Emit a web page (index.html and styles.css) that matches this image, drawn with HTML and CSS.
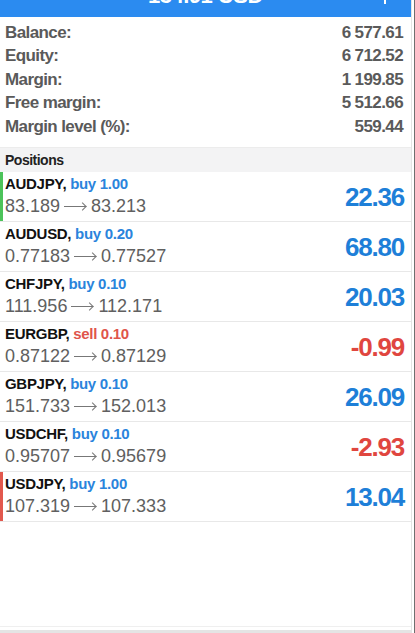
FILE: index.html
```html
<!DOCTYPE html>
<html lang="en">
<head>
    <meta charset="UTF-8">
    <meta name="viewport" content="width=device-width, initial-scale=1.0">
    <title>Trade</title>
    <link rel="stylesheet" href="styles.css">
</head>
<body>
    <div class="screen">
        <div class="topbar">
            <span class="title">134.91 USD</span>
            <span class="plus"></span>
        </div>

        <div class="account">
            <div class="acc-row"><span>Balance:</span><span>6 577.61</span></div>
            <div class="acc-row"><span>Equity:</span><span>6 712.52</span></div>
            <div class="acc-row"><span>Margin:</span><span>1 199.85</span></div>
            <div class="acc-row"><span>Free margin:</span><span>5 512.66</span></div>
            <div class="acc-row"><span>Margin level (%):</span><span>559.44</span></div>
        </div>

        <div class="section">Positions</div>

        <div class="positions">
            <div class="pos mark-green">
                <div class="pos-info">
                    <div class="pos-head">AUDJPY, <span class="buy">buy 1.00</span></div>
                    <div class="pos-price">83.189<span class="arrow"></span>83.213</div>
                </div>
                <div class="profit up">22.36</div>
            </div>
            <div class="pos">
                <div class="pos-info">
                    <div class="pos-head">AUDUSD, <span class="buy">buy 0.20</span></div>
                    <div class="pos-price">0.77183<span class="arrow"></span>0.77527</div>
                </div>
                <div class="profit up">68.80</div>
            </div>
            <div class="pos">
                <div class="pos-info">
                    <div class="pos-head">CHFJPY, <span class="buy">buy 0.10</span></div>
                    <div class="pos-price">111.956<span class="arrow"></span>112.171</div>
                </div>
                <div class="profit up">20.03</div>
            </div>
            <div class="pos">
                <div class="pos-info">
                    <div class="pos-head">EURGBP, <span class="sell">sell 0.10</span></div>
                    <div class="pos-price">0.87122<span class="arrow"></span>0.87129</div>
                </div>
                <div class="profit down">-0.99</div>
            </div>
            <div class="pos">
                <div class="pos-info">
                    <div class="pos-head">GBPJPY, <span class="buy">buy 0.10</span></div>
                    <div class="pos-price">151.733<span class="arrow"></span>152.013</div>
                </div>
                <div class="profit up">26.09</div>
            </div>
            <div class="pos">
                <div class="pos-info">
                    <div class="pos-head">USDCHF, <span class="buy">buy 0.10</span></div>
                    <div class="pos-price">0.95707<span class="arrow"></span>0.95679</div>
                </div>
                <div class="profit down">-2.93</div>
            </div>
            <div class="pos mark-red">
                <div class="pos-info">
                    <div class="pos-head">USDJPY, <span class="buy">buy 1.00</span></div>
                    <div class="pos-price">107.319<span class="arrow"></span>107.333</div>
                </div>
                <div class="profit up">13.04</div>
            </div>
        </div>

        <div class="filler"></div>
        <div class="bottombar"></div>
    </div>
</body>
</html>
```

FILE: styles.css
```css
html, body {
    margin: 0;
    height: 100%;
}

body {
    font-family: "Liberation Sans", Arial, sans-serif;
    background-color: #fff;
    color: #555;
    border-right: 1px solid #6f6f6f;
    box-sizing: border-box;
}

.screen {
    display: flex;
    flex-direction: column;
    width: 412px;
    height: 100%;
    border-right: 1px solid #e4e4e4;
    box-sizing: border-box;
}

.topbar {
    height: 17px;
    background-color: #2b8bf0;
    display: flex;
    justify-content: center;
    position: relative;
    overflow: hidden;
    flex-shrink: 0;
}

.title {
    color: #fff;
    font-weight: bold;
    font-size: 22px;
    letter-spacing: -0.5px;
    line-height: 28px;
    margin-top: -17.6px;
}

/* only the foot of the plus sign shows */
.plus {
    position: absolute;
    right: 25px;
    top: -12px;
    width: 2px;
    height: 16px;
    background-color: #fff;
}

.account {
    padding: 4px 8px 9px 5px;
    font-weight: bold;
    font-size: 17px;
    letter-spacing: -0.6px;
    color: #5a5a5a;
}

.acc-row {
    display: flex;
    justify-content: space-between;
    height: 23.4px;
    line-height: 23.4px;
}

.section {
    background-color: #f3f3f4;
    border-top: 1px solid #ececec;
    height: 24px;
    line-height: 24px;
    padding-left: 5px;
    font-weight: bold;
    font-size: 14px;
    letter-spacing: -0.5px;
    color: #222;
    flex-shrink: 0;
}

.pos {
    display: flex;
    justify-content: space-between;
    align-items: center;
    height: 49px;
    border-bottom: 1px solid #e8e8e8;
    padding: 0 7px 0 5px;
    position: relative;
}

.pos.mark-green::before,
.pos.mark-red::before {
    content: "";
    position: absolute;
    left: 0;
    top: 0;
    bottom: 0;
    width: 3px;
}

.pos.mark-green::before {
    background-color: #4cc35a;
}

.pos.mark-red::before {
    background-color: #e2584d;
}

.pos-head {
    font-weight: bold;
    font-size: 15px;
    letter-spacing: -0.3px;
    color: #111;
    line-height: 20px;
}

.buy {
    color: #2a84dc;
}

.sell {
    color: #e0554b;
}

.pos-price {
    display: flex;
    align-items: center;
    font-size: 18px;
    color: #606060;
    line-height: 24px;
}

.arrow {
    width: 22px;
    height: 1px;
    margin: 1px 5px 0 4px;
    background-color: #777;
    position: relative;
}

.arrow::after {
    content: "";
    position: absolute;
    right: 0;
    top: -3px;
    width: 6px;
    height: 6px;
    border-top: 1px solid #777;
    border-right: 1px solid #777;
    transform: translate(-0.5px, 0.5px) rotate(45deg);
    box-sizing: border-box;
}

.profit {
    font-weight: bold;
    font-size: 26px;
    letter-spacing: -1.2px;
    margin-top: 3px;
}

.profit.up {
    color: #1e7fd8;
}

.profit.down {
    color: #e0463f;
}

.filler {
    flex: 1;
    border-bottom: 1px solid #efefef;
}

.bottombar {
    flex-shrink: 0;
    height: 3px;
    margin-top: 3px;
    background-color: #e4e4e4;
}
```
